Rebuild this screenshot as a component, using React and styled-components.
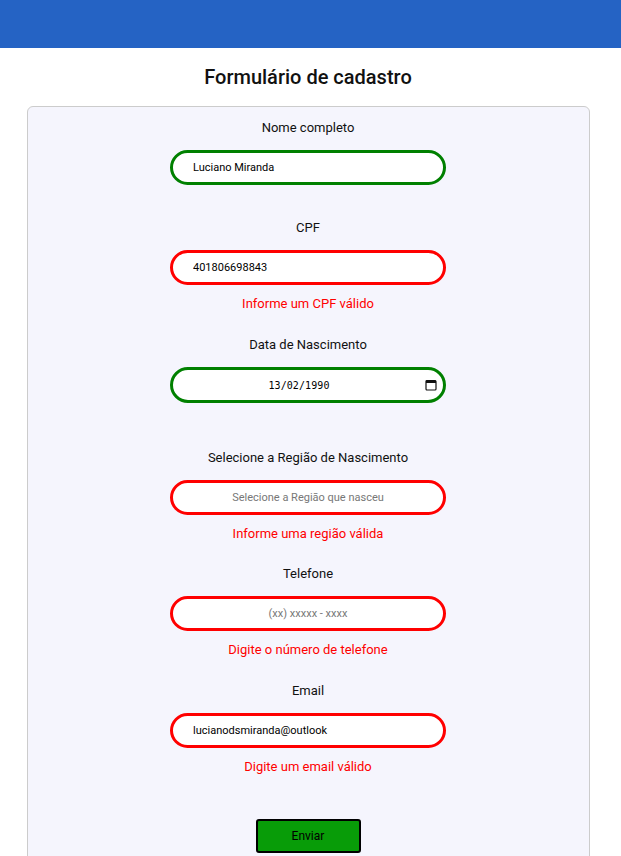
import React from 'react';
import styled, { createGlobalStyle } from 'styled-components';

const GlobalStyle = createGlobalStyle`
  body {
    margin: 0;
    background: #ffffff;
    font-family: Roboto, "Liberation Sans", Arial, sans-serif;
    color: #111;
  }
  * { box-sizing: border-box; }
`;

const Header = styled.header`
  height: 48px;
  background: #2563c4;
`;

const Main = styled.main`
  width: calc(100% - 5px);
`;

const Title = styled.h1`
  margin: 17px 0;
  font-size: 20px;
  line-height: 24px;
  font-weight: 500;
  text-align: center;
  color: #111;
`;

const Card = styled.form`
  width: 563px;
  margin: 0 auto;
  padding: 11px 0 40px;
  background: #f5f5fd;
  border: 1px solid #cccccc;
  border-radius: 6px;
  display: flex;
  flex-direction: column;
  align-items: center;
`;

const Field = styled.div`
  display: flex;
  flex-direction: column;
  align-items: center;
  margin-bottom: ${({ $space }) => $space}px;
`;

const Label = styled.label`
  font-size: 13px;
  line-height: 20px;
  color: #111;
  margin-bottom: 12px;
`;

const Input = styled.input`
  width: 276px;
  height: ${({ $tall }) => ($tall ? 36 : 35)}px;
  border: 3px solid ${({ $valid }) => ($valid ? '#008000' : '#ff0000')};
  border-radius: 18px;
  background: #ffffff;
  padding: 0 20px;
  font-family: Roboto, "Liberation Sans", Arial, sans-serif;
  font-size: 11px;
  color: #000;
  text-align: ${({ $center }) => ($center ? 'center' : 'left')};
  outline: none;

  &::placeholder {
    color: #777777;
  }
`;

const DateWrap = styled.div`
  position: relative;
`;

const DateInput = styled(Input)`
  padding-right: 38px;
  font-family: "DejaVu Sans Mono", "Liberation Mono", monospace;
  font-size: 10px;
  letter-spacing: 0.1px;
`;

const CalendarIcon = styled.svg`
  position: absolute;
  right: 9px;
  top: 12px;
  width: 12px;
  height: 12px;
  pointer-events: none;
`;

const Error = styled.span`
  margin-top: 9px;
  font-size: 13px;
  line-height: 20px;
  color: #ff0000;
`;

const Button = styled.button`
  width: 105px;
  height: 34px;
  background: #089c08;
  border: 2px solid #000000;
  border-radius: 3px;
  font-family: Roboto, "Liberation Sans", Arial, sans-serif;
  font-size: 12px;
  color: #000;
`;

export default function App() {
  return (
    <>
      <GlobalStyle />
      <Header />
      <Main>
        <Title>Formulário de cadastro</Title>
        <Card onSubmit={(e) => e.preventDefault()}>
          <Field $space={33}>
            <Label>Nome completo</Label>
            <Input $valid defaultValue="Luciano Miranda" />
          </Field>

          <Field $space={21}>
            <Label>CPF</Label>
            <Input defaultValue="401806698843" />
            <Error>Informe um CPF válido</Error>
          </Field>

          <Field $space={45}>
            <Label>Data de Nascimento</Label>
            <DateWrap>
              <DateInput $valid $tall $center defaultValue="13/02/1990" />
              <CalendarIcon viewBox="0 0 12 12">
                <rect x="1" y="1.5" width="10" height="9.5" rx="1" fill="none" stroke="#111" strokeWidth="1.2" />
                <rect x="1" y="1.5" width="10" height="2.5" fill="#111" />
              </CalendarIcon>
            </DateWrap>
          </Field>

          <Field $space={20}>
            <Label>Selecione a Região de Nascimento</Label>
            <Input $center readOnly placeholder="Selecione a Região que nasceu" />
            <Error>Informe uma região válida</Error>
          </Field>

          <Field $space={21}>
            <Label>Telefone</Label>
            <Input $center placeholder="(xx) xxxxx - xxxx" />
            <Error>Digite o número de telefone</Error>
          </Field>

          <Field $space={42}>
            <Label>Email</Label>
            <Input defaultValue="lucianodsmiranda@outlook" />
            <Error>Digite um email válido</Error>
          </Field>

          <Button type="submit">Enviar</Button>
        </Card>
      </Main>
    </>
  );
}
